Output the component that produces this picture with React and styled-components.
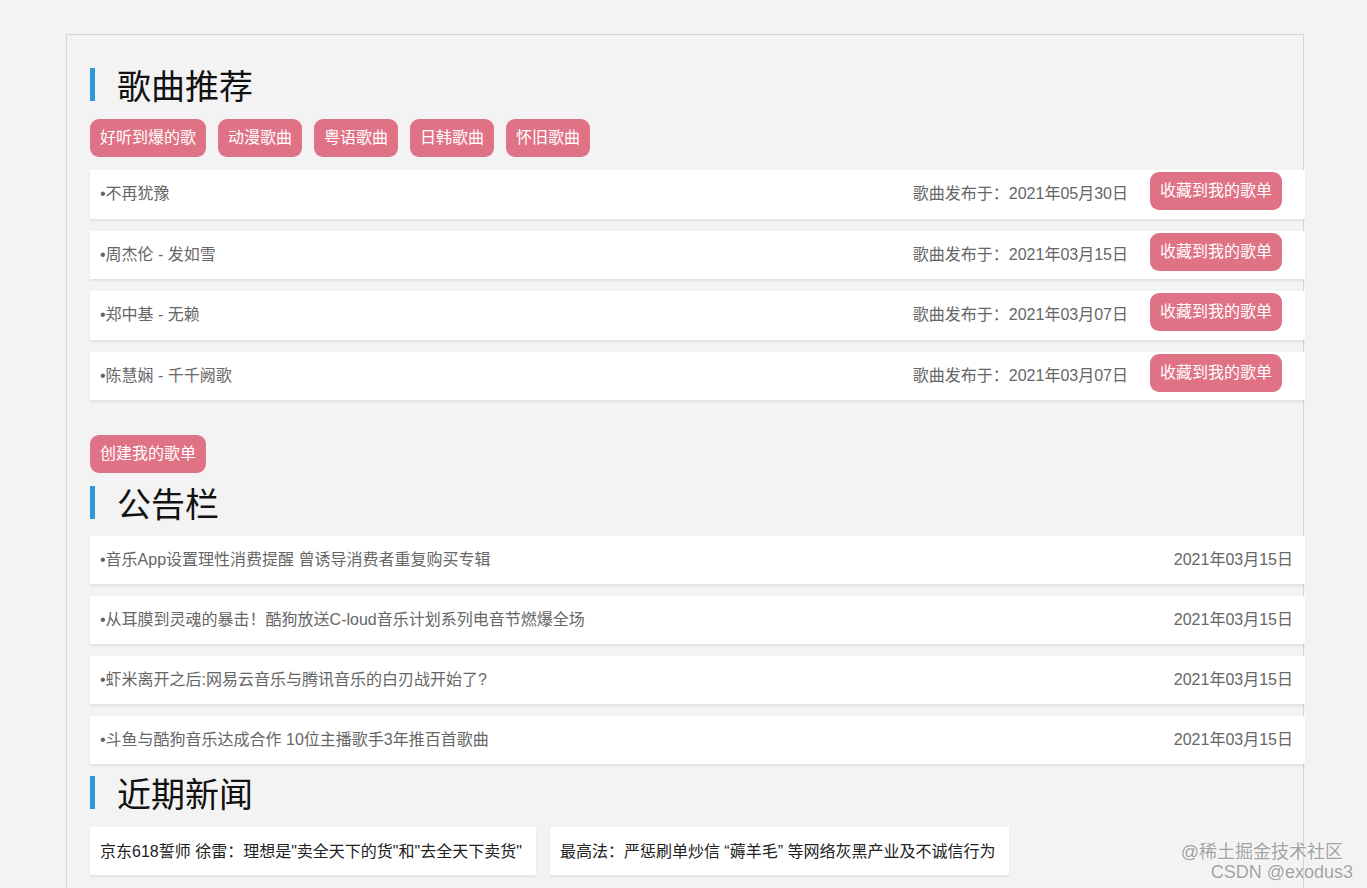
import styled, { createGlobalStyle } from 'styled-components'

const GlobalStyle = createGlobalStyle`
  html, body {
    margin: 0;
    padding: 0;
    background: #f3f3f3;
    font-family: "Liberation Sans", "Noto Sans CJK SC", "Microsoft YaHei", sans-serif;
    overflow: hidden;
  }
`

const songs = [
  { name: '不再犹豫', date: '2021年05月30日' },
  { name: '周杰伦 - 发如雪', date: '2021年03月15日' },
  { name: '郑中基 - 无赖', date: '2021年03月07日' },
  { name: '陈慧娴 - 千千阙歌', date: '2021年03月07日' },
]

const notices = [
  '音乐App设置理性消费提醒 曾诱导消费者重复购买专辑',
  '从耳膜到灵魂的暴击！酷狗放送C-loud音乐计划系列电音节燃爆全场',
  '虾米离开之后:网易云音乐与腾讯音乐的白刃战开始了?',
  '斗鱼与酷狗音乐达成合作 10位主播歌手3年推百首歌曲',
]

const news = [
  '京东618誓师 徐雷：理想是"卖全天下的货"和"去全天下卖货"',
  '最高法：严惩刷单炒信 “薅羊毛” 等网络灰黑产业及不诚信行为',
]

const tags = ['好听到爆的歌', '动漫歌曲', '粤语歌曲', '日韩歌曲', '怀旧歌曲']

const Page = styled.div`
  position: relative;
  height: 888px;
  padding-top: 34px;
  box-sizing: border-box;
`

const Wrap = styled.div`
  margin-left: 66px;
  width: 1238px;
  height: 900px;
  border: 1px solid #d4d4d4;
  border-bottom: none;
  box-sizing: border-box;
  padding: 0 0 0 23px;
`

const Title = styled.h2`
  margin: ${p => p.mt}px 0 0 0;
  height: 33px;
  border-left: 5px solid #2e98d9;
  padding-left: 22px;
  display: flex;
  align-items: center;
  font-family: "Noto Sans CJK SC", sans-serif;
  font-size: 34px;
  font-weight: normal;
  color: #111;
  line-height: 33px;
`

const TagBar = styled.div`
  display: flex;
  gap: 12px;
  margin-top: 18px;
`

const PinkButton = styled.button`
  height: 38px;
  padding: 0 10px;
  margin-top: ${p => p.mt || 0}px;
  align-self: ${p => (p.mt ? 'flex-start' : 'auto')};
  border: none;
  border-radius: 9px;
  background: #df7285;
  color: #fff;
  font-family: inherit;
  font-size: 16px;
  line-height: 36px;
  white-space: nowrap;
  cursor: pointer;
`

const List = styled.ul`
  list-style: none;
  margin: ${p => p.mt}px 0 0 0;
  padding: 0;
  width: 1215px;
  display: flex;
  flex-direction: column;
  gap: 12px;
`

const Row = styled.li`
  height: ${p => p.h}px;
  box-sizing: border-box;
  background: #fff;
  box-shadow: 0 2px 2px rgba(0, 0, 0, 0.07);
  display: flex;
  align-items: center;
  padding: 0 ${p => p.pr}px 4px 10px;
  font-size: 16px;
  color: #666;
`

const RowName = styled.span`
  flex: 1;
  white-space: nowrap;
`

const RowDate = styled.span`
  margin-right: ${p => p.mr || 0}px;
  white-space: nowrap;
`

const CreateBox = styled.div`
  margin-top: 35px;
`

const NewsBar = styled.div`
  display: flex;
  gap: 14px;
  margin-top: 18px;
`

const NewsCard = styled.div`
  height: 48px;
  box-sizing: border-box;
  background: #fff;
  box-shadow: 0 2px 2px rgba(0, 0, 0, 0.07);
  display: flex;
  align-items: center;
  padding: 0 14px 2px 10px;
  font-size: 16px;
  color: #222;
  white-space: nowrap;
`

const Watermark = styled.div`
  position: absolute;
  right: 14px;
  bottom: 6px;
  text-align: right;
  font-family: "Liberation Sans", "Noto Sans CJK SC", sans-serif;
  font-size: 18px;
  line-height: 20px;
  color: rgba(150, 150, 150, 0.9);
  text-shadow: 0 0 2px #fff;
  pointer-events: none;

  span {
    margin-right: 10px;
  }
`

const App = () => {
  return (
    <Page>
      <GlobalStyle />
      <Wrap>
        <Title mt={33}>歌曲推荐</Title>
        <TagBar>
          {tags.map(t => <PinkButton key={t}>{t}</PinkButton>)}
        </TagBar>
        <List mt={13}>
          {songs.map(s => (
            <Row key={s.name} h={48.5} pr={23}>
              <RowName>•{s.name}</RowName>
              <RowDate mr={22}>歌曲发布于：{s.date}</RowDate>
              <PinkButton mt={2}>收藏到我的歌单</PinkButton>
            </Row>
          ))}
        </List>
        <CreateBox>
          <PinkButton>创建我的歌单</PinkButton>
        </CreateBox>
        <Title mt={13}>公告栏</Title>
        <List mt={17}>
          {notices.map(n => (
            <Row key={n} h={48} pr={12}>
              <RowName>•{n}</RowName>
              <RowDate>2021年03月15日</RowDate>
            </Row>
          ))}
        </List>
        <Title mt={12}>近期新闻</Title>
        <NewsBar>
          {news.map(n => <NewsCard key={n}>{n}</NewsCard>)}
        </NewsBar>
      </Wrap>
      <Watermark>
        <span>@稀土掘金技术社区</span><br />CSDN @exodus3
      </Watermark>
    </Page>
  )
}

export default App
